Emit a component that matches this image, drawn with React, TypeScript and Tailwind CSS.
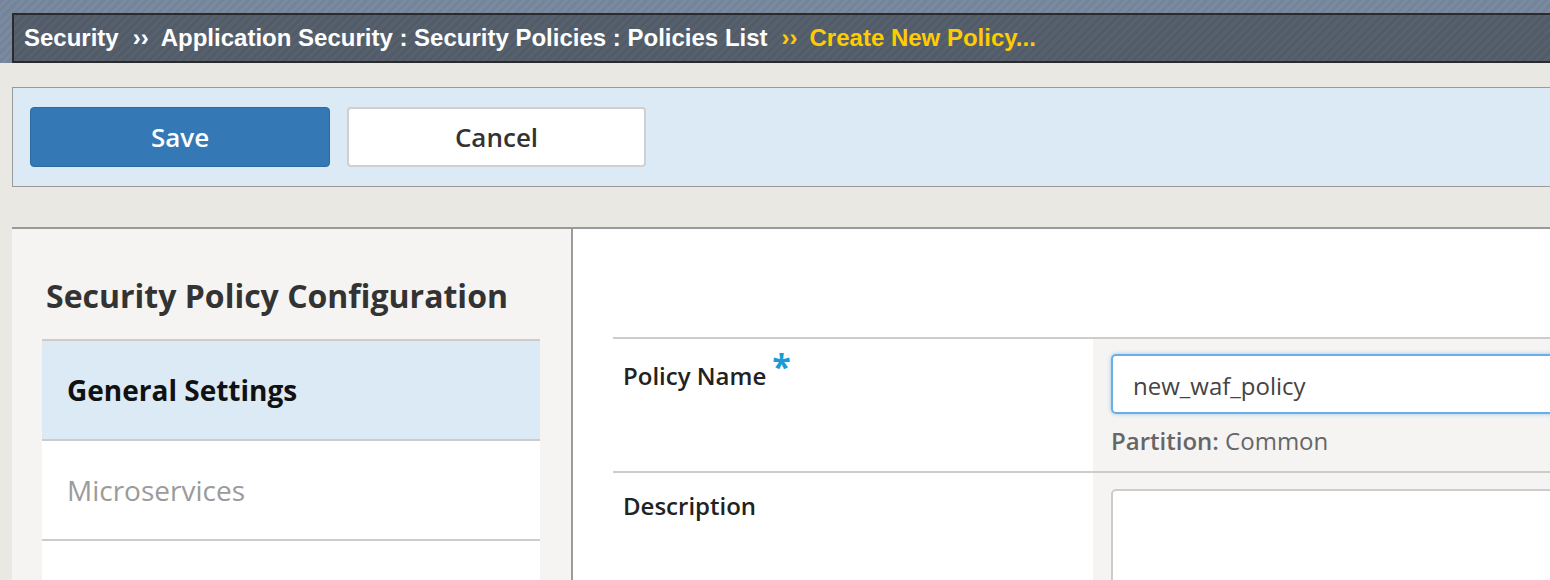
export default function App() {
  return (
    <div className="h-[580px] w-[1550px] overflow-hidden bg-[#e9e8e3] font-['Open_Sans',sans-serif]">
      {/* breadcrumb strip */}
      <div className="h-[63px] pl-[12px] pt-[13px] bg-[repeating-linear-gradient(135deg,#74849a_0px,#74849a_3px,#7a8a9f_3px,#7a8a9f_6px)]">
        <div className="flex h-[50px] items-center whitespace-nowrap border-y-2 border-l-2 border-[#2b2b2b] pl-[10px] font-['Liberation_Sans',Arial,sans-serif] text-[24px] font-bold text-white bg-[repeating-linear-gradient(135deg,#525c69_0px,#525c69_3px,#57616e_3px,#57616e_6px)]">
          <span>Security</span>
          <span className="ml-[14px] mr-[12px]">››</span>
          <span>Application Security : Security Policies : Policies List</span>
          <span className="ml-[14px] mr-[12px] text-[#ffcc00]">››</span>
          <span className="text-[#ffcc00]">Create New Policy...</span>
        </div>
      </div>

      {/* toolbar */}
      <div className="pl-[12px] pt-[24px]">
        <div className="flex h-[100px] items-center gap-[17px] border-y border-l border-[#9a9a9a] bg-[#dbeaf4] pl-[17px]">
          <button className="h-[60px] w-[300px] rounded-[4px] border border-[#2d6aa0] bg-[#3479b6] text-[26px] font-semibold text-white">
            Save
          </button>
          <button className="h-[60px] w-[299px] rounded-[4px] border-2 border-[#d0d0d0] bg-white text-[26px] font-semibold text-[#333]">
            Cancel
          </button>
        </div>
      </div>

      {/* main */}
      <div className="mt-[40px] pl-[12px]">
        <div className="flex h-[400px] border-t-2 border-[#9a9a9a]">
          <div className="w-[561px] shrink-0 border-r-2 border-[#9a9a9a] bg-[#f5f4f2] pl-[30px]">
            <div className="h-[110px] whitespace-nowrap pl-[4px] pt-[47px] text-[32px] font-bold leading-[40px] text-[#333]">
              Security Policy Configuration
            </div>
            <div className="w-[498px]">
              <div className="flex h-[100px] items-center border-t-2 border-[#cccccc] bg-[#dbeaf4] pl-[25px] text-[28px] font-bold text-[#111]">
                General Settings
              </div>
              <div className="flex h-[100px] items-center border-t-2 border-[#cccccc] bg-white pl-[25px] text-[28px] text-[#9b9b9b]">
                Microservices
              </div>
              <div className="h-[100px] border-t-2 border-[#cccccc] bg-white" />
            </div>
          </div>

          <div className="min-w-0 flex-1 overflow-hidden bg-white pl-[40px]">
            <div className="h-[108px]" />
            <div className="border-t-2 border-[#cccccc]">
              <div className="flex h-[132px]">
                <div className="w-[480px] shrink-0 whitespace-nowrap pl-[10px] pt-[17px] text-[24px] font-semibold leading-[32px] text-[#222]">
                  Policy Name
                  <span className="relative top-[-6px] ml-[6px] text-[34px] font-bold text-[#1a9ad6]">*</span>
                </div>
                <div className="min-w-0 flex-1 bg-[#f5f4f2] pl-[18px] pt-[15px]">
                  <div className="flex h-[60px] w-[600px] items-center rounded-[5px] border-2 border-[#6aaee8] bg-white pl-[20px] pt-[3px] text-[24px] text-[#444] shadow-[0_0_4px_rgba(102,175,233,0.6)]">
                    new_waf_policy
                  </div>
                  <div className="mt-[11px] whitespace-nowrap text-[24px] leading-[32px] text-[#666]">
                    <span className="font-semibold">Partition:</span> Common
                  </div>
                </div>
              </div>
            </div>
            <div className="border-t-2 border-[#cccccc]">
              <div className="flex h-[140px]">
                <div className="w-[480px] shrink-0 pl-[10px] pt-[17px] text-[24px] font-semibold leading-[32px] text-[#222]">
                  Description
                </div>
                <div className="min-w-0 flex-1 bg-[#f5f4f2] pl-[18px] pt-[16px]">
                  <div className="h-[140px] w-[600px] rounded-[5px] border-2 border-[#cccccc] bg-white" />
                </div>
              </div>
            </div>
          </div>
        </div>
      </div>
    </div>
  )
}
